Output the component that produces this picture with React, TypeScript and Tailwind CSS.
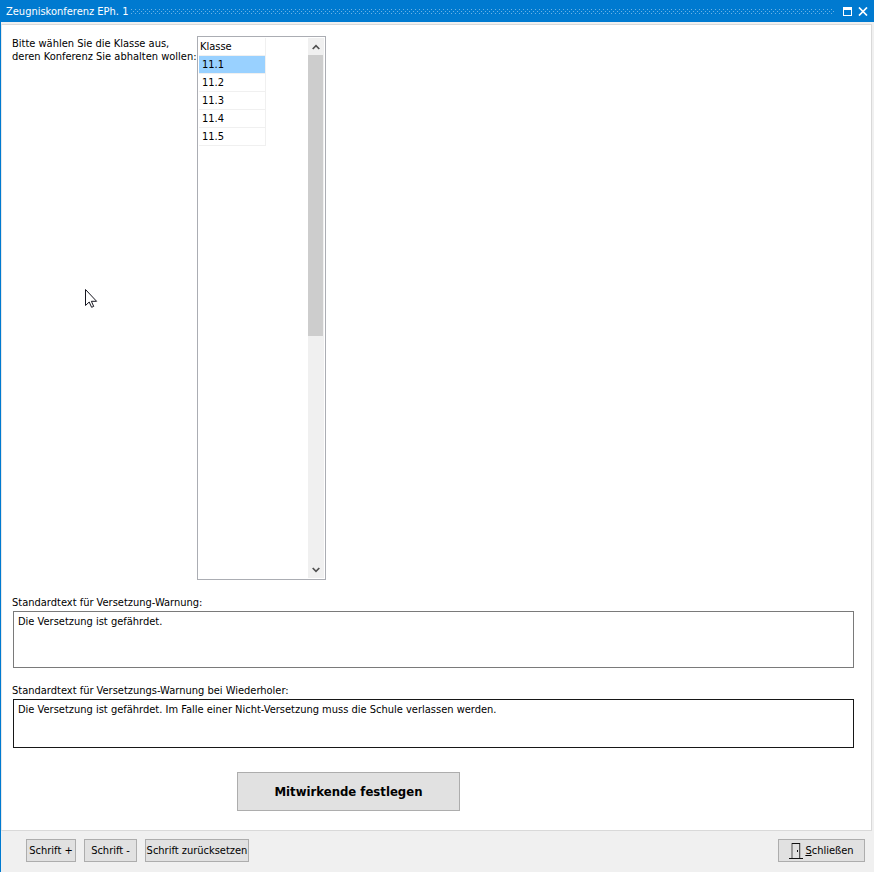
import React, { useState } from 'react';

const CLASSES = ['11.1', '11.2', '11.3', '11.4', '11.5'];

const TitleBar: React.FC = () => (
  <header className="flex h-[22px] items-center bg-[#007ad0] pr-[3px] pl-[6px] text-white">
    <h1 className="pt-px leading-4 whitespace-nowrap">Zeugniskonferenz EPh. 1</h1>
    <svg className="ml-[3px] h-[5px] min-w-0 flex-1" aria-hidden="true">
      <defs>
        <pattern id="grip" width="4" height="4" patternUnits="userSpaceOnUse">
          <path d="M0 0h1v1H0zM2 2h1v1H2z" fill="#6cb3e6" />
        </pattern>
      </defs>
      <rect width="100%" height="5" fill="url(#grip)" />
    </svg>
    <div className="ml-1 flex">
      <button type="button" aria-label="Maximieren" className="flex size-4 items-center justify-center">
        <svg width="9" height="9" viewBox="0 0 9 9" shapeRendering="crispEdges">
          <path d="M0 0h9v9H0zM1 3v5h7V3z" fill="#fff" fillRule="evenodd" />
        </svg>
      </button>
      <button type="button" aria-label="Fenster schließen" className="flex size-4 items-center justify-center">
        <svg width="10" height="9" viewBox="0 0 10 9">
          <path d="M1 0.5l8 8M9 0.5l-8 8" stroke="#fff" strokeWidth="1.7" />
        </svg>
      </button>
    </div>
  </header>
);

const ScrollBar: React.FC = () => (
  <div className="flex w-4 flex-col bg-[#f0f0f0]" aria-hidden="true">
    <div className="flex h-[17px] items-center justify-center pr-px">
      <svg width="8" height="6" viewBox="0 0 8 6">
        <path d="M0.7 5L4 1.7 7.3 5" fill="none" stroke="#505050" strokeWidth="1.7" />
      </svg>
    </div>
    <div className="flex-1 pr-px">
      <div className="h-[281px] bg-[#cdcdcd]" />
    </div>
    <div className="flex h-[17px] items-center justify-center pr-px">
      <svg width="8" height="6" viewBox="0 0 8 6">
        <path d="M0.7 1L4 4.3 7.3 1" fill="none" stroke="#505050" strokeWidth="1.7" />
      </svg>
    </div>
  </div>
);

const ClassList: React.FC = () => {
  const [selected, setSelected] = useState('11.1');

  return (
    <div className="flex h-[544px] w-[129px] justify-between border border-[#abadb3] p-px">
      <table className="h-fit w-[67px] border-separate border-spacing-0 text-left">
        <thead>
          <tr>
            <th className="h-[18px] border-r border-b border-[#f0f0f0] p-0 pt-px pl-px leading-4 font-normal">Klasse</th>
          </tr>
        </thead>
        <tbody>
          {CLASSES.map((name) => (
            <tr key={name} onClick={() => setSelected(name)}>
              <td
                className={`h-[18px] border-r border-b border-[#f0f0f0] p-0 pt-px pl-[3px] leading-4 ${name === selected ? 'bg-[#99d1ff]' : ''}`}
              >
                {name}
              </td>
            </tr>
          ))}
        </tbody>
      </table>
      <ScrollBar />
    </div>
  );
};

const FooterButton: React.FC<{ className: string; children: React.ReactNode }> = ({ className, children }) => (
  <button
    type="button"
    className={`flex h-[23px] items-center justify-center border border-[#adadad] bg-[#e1e1e1] whitespace-nowrap ${className}`}
  >
    {children}
  </button>
);

const App: React.FC = () => (
  <div className="flex min-h-screen flex-col bg-[#f0f0f0] font-['DejaVu_Sans_Condensed','DejaVu_Sans',sans-serif] text-[11px] leading-[13px] text-black">
    <TitleBar />
    <div className="flex flex-1 flex-col border-l border-[#007ad0] pt-[2px]">
      <main className="relative mr-[2px] border border-[#d9d9d9] border-l-[#e8e8e8] bg-white pt-[11px] pr-[17px] pb-[19px] pl-[10px]">
        <section className="flex items-start">
          <p className="w-[185px] pt-px whitespace-nowrap">
            Bitte wählen Sie die Klasse aus,
            <br />
            deren Konferenz Sie abhalten wollen:
          </p>
          <ClassList />
        </section>

        <section className="mt-4 flex flex-col">
          <label htmlFor="warning">Standardtext für Versetzung-Warnung:</label>
          <textarea
            id="warning"
            className="mt-[2px] ml-px h-[57px] resize-none border border-[#7a7a7a] px-1 py-[3px] outline-none"
            defaultValue="Die Versetzung ist gefährdet."
          />
        </section>

        <section className="mt-4 flex flex-col">
          <label htmlFor="warning-repeat">Standardtext für Versetzungs-Warnung bei Wiederholer:</label>
          <textarea
            id="warning-repeat"
            className="mt-[2px] ml-px h-[49px] resize-none border border-[#171717] px-1 py-[3px] outline-none"
            defaultValue="Die Versetzung ist gefährdet. Im Falle einer Nicht-Versetzung muss die Schule verlassen werden."
          />
        </section>

        <button
          type="button"
          className="mt-6 ml-[225px] flex h-[39px] w-[223px] items-center justify-center border border-[#adadad] bg-[#e1e1e1] text-[13px] font-bold"
        >
          Mitwirkende festlegen
        </button>

        {/* mouse pointer */}
        <svg
          className="pointer-events-none absolute top-[264px] left-[83px]"
          width="13"
          height="20"
          viewBox="0 0 13 20"
          aria-hidden="true"
        >
          <path
            d="M0.5 0.5v16l3.7-3.5 2.4 5.3 2.1-0.9-2.3-5.1h5.2z"
            fill="#fff"
            stroke="#15151f"
            strokeWidth="1"
          />
        </svg>
      </main>

      <footer className="flex items-center gap-2 pt-2 pr-[9px] pb-[10px] pl-[25px]">
        <FooterButton className="w-[50px]">Schrift +</FooterButton>
        <FooterButton className="w-[53px]">Schrift -</FooterButton>
        <FooterButton className="w-[104px]">Schrift zurücksetzen</FooterButton>
        <FooterButton className="ml-auto w-[87px] gap-[2px]">
          <svg width="14" height="18" viewBox="0 0 14 18" aria-hidden="true">
            <path d="M0 16.5h14" stroke="#111" />
            <path d="M2.5 16V1M3.5 16V2" stroke="#999" />
            <path d="M10.5 16V1" stroke="#555" />
            <path d="M11.5 16V1" stroke="#bbb" />
            <path d="M3 1.5h8" stroke="#111" />
            <path d="M8 8h1v2H8z" fill="#111" />
          </svg>
          <span>
            <u>S</u>chließen
          </span>
        </FooterButton>
      </footer>
    </div>
  </div>
);

export default App;
